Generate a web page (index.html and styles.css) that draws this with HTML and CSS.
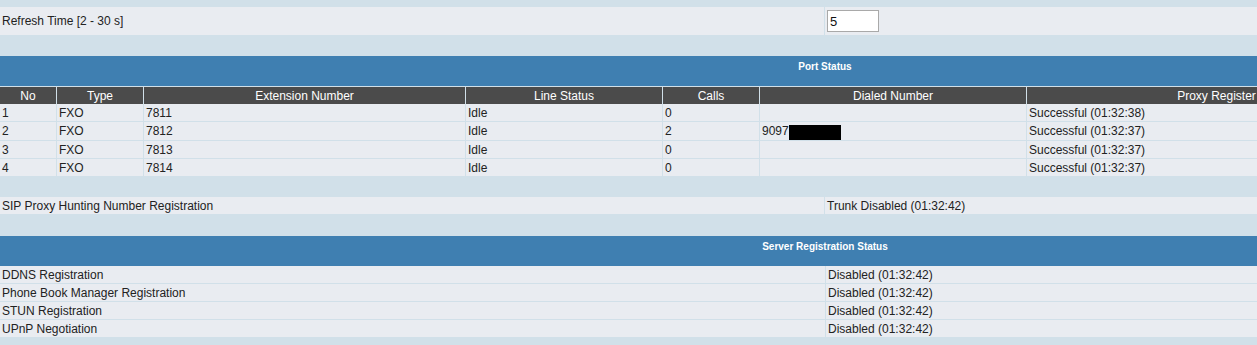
FILE: index.html
```html
<!DOCTYPE html>
<html lang="en">
<head>
    <meta charset="UTF-8">
    <title>Status</title>
    <link rel="stylesheet" href="styles.css">
</head>
<body>
    <div class="page">
        <!-- Refresh -->
        <table class="kv refresh">
            <tr>
                <td class="label">Refresh Time [2 - 30 s]</td>
                <td class="value"><input type="text" class="refresh-input" value="5"></td>
            </tr>
        </table>

        <div class="gap"></div>

        <!-- Port Status -->
        <table class="grid">
            <colgroup>
                <col style="width:56px">
                <col style="width:87px">
                <col style="width:322px">
                <col style="width:197px">
                <col style="width:97px">
                <col style="width:267px">
                <col style="width:380px">
                <col>
            </colgroup>
            <tr><td class="section" colspan="8">Port Status</td></tr>
            <tr class="head">
                <th>No</th>
                <th>Type</th>
                <th>Extension Number</th>
                <th>Line Status</th>
                <th>Calls</th>
                <th>Dialed Number</th>
                <th>Proxy Register</th>
                <th></th>
            </tr>
            <tr><td>1</td><td>FXO</td><td>7811</td><td>Idle</td><td>0</td><td></td><td>Successful (01:32:38)</td><td></td></tr>
            <tr><td>2</td><td>FXO</td><td>7812</td><td>Idle</td><td>2</td><td>9097<span class="redact"></span></td><td>Successful (01:32:37)</td><td></td></tr>
            <tr><td>3</td><td>FXO</td><td>7813</td><td>Idle</td><td>0</td><td></td><td>Successful (01:32:37)</td><td></td></tr>
            <tr><td>4</td><td>FXO</td><td>7814</td><td>Idle</td><td>0</td><td></td><td>Successful (01:32:37)</td><td></td></tr>
        </table>

        <div class="gap small"></div>

        <table class="kv">
            <tr>
                <td class="label">SIP Proxy Hunting Number Registration</td>
                <td class="value">Trunk Disabled (01:32:42)</td>
            </tr>
        </table>

        <div class="gap"></div>

        <!-- Server Registration Status -->
        <table class="kv">
            <tr><td class="section" colspan="2">Server Registration Status</td></tr>
            <tr><td class="label">DDNS Registration</td><td class="value">Disabled (01:32:42)</td></tr>
            <tr><td class="label">Phone Book Manager Registration</td><td class="value">Disabled (01:32:42)</td></tr>
            <tr><td class="label">STUN Registration</td><td class="value">Disabled (01:32:42)</td></tr>
            <tr><td class="label">UPnP Negotiation</td><td class="value">Disabled (01:32:42)</td></tr>
        </table>
    </div>
</body>
</html>
```
FILE: styles.css
```css
body {
    margin: 0;
    background-color: #d1e0e9;
    overflow: hidden;
    font-family: "Liberation Sans", Arial, sans-serif;
}
.page {
    width: 1650px;
    padding-top: 7px;
}
table {
    width: 100%;
    border-collapse: separate;
    border-spacing: 0;
    table-layout: fixed;
    font-size: 12px;
    color: #222;
}
td {
    box-sizing: border-box;
    background: #e9ecf1;
    height: 18px;
    padding: 2px 0 0 2px;
    border-bottom: 1px solid #d1e0e9;
    border-left: 1px solid #d1e0e9;
    white-space: nowrap;
    overflow: hidden;
    line-height: 15px;
    vertical-align: top;
}
td:first-child {
    border-left: none;
}
.gap {
    height: 21px;
}
.gap.small {
    height: 20px;
}
.kv .label {
    width: 824px;
}
.refresh td {
    height: 28px;
    padding-top: 0;
    line-height: 28px;
    vertical-align: middle;
    border-bottom: none;
}
.refresh-input {
    display: block;
    box-sizing: border-box;
    width: 52px;
    height: 22px;
    margin: 0;
    padding: 0 2px;
    border: 1px solid #a9a9a9;
    background: #fff;
    font: 13px "Liberation Sans", Arial, sans-serif;
    color: #111;
}
td.section {
    background: #3f7fb1;
    color: #fff;
    font-size: 10px;
    font-weight: bold;
    text-align: center;
    height: 30px;
    line-height: 12px;
    padding: 5px 0 0;
    border-bottom: none;
}
.head th {
    box-sizing: border-box;
    background: #4b4b4b;
    color: #fff;
    font-weight: normal;
    font-size: 12px;
    height: 18px;
    line-height: 15px;
    padding: 2px 0 0;
    vertical-align: top;
    border-top: 1px solid #d1e0e9;
    border-left: 1px solid #d1e0e9;
    white-space: nowrap;
}
.head th:first-child {
    border-left: none;
}
.redact {
    display: inline-block;
    width: 52px;
    height: 15px;
    background: #000;
    vertical-align: top;
    margin-top: 1px;
}
```
